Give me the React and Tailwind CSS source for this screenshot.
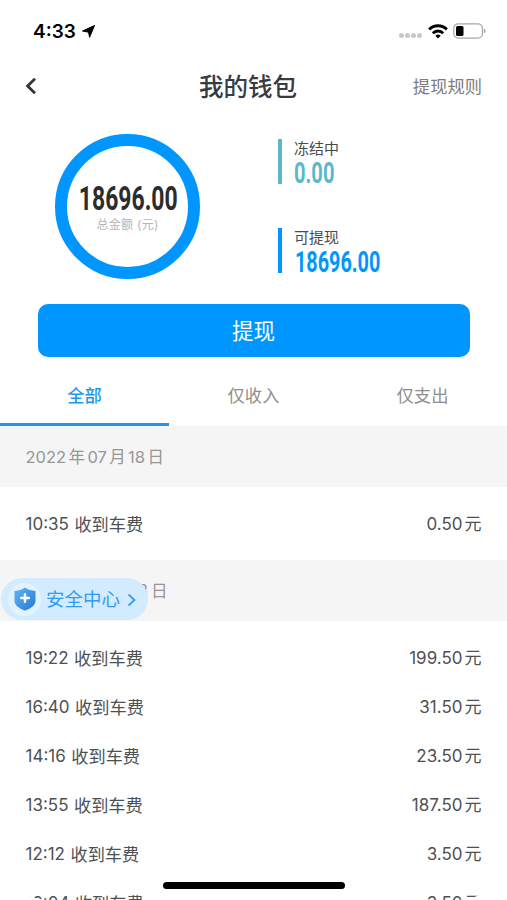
import React, { useState } from 'react';

const tabs = ['全部', '仅收入', '仅支出'];

const groups = [
  {
    date: ['2022', '年', '07', '月', '18', '日'],
    items: [{ time: '10:35', amount: '0.50' }],
  },
  {
    date: ['2022', '年', '07', '月', '13', '日'],
    items: [
      { time: '19:22', amount: '199.50' },
      { time: '16:40', amount: '31.50' },
      { time: '14:16', amount: '23.50' },
      { time: '13:55', amount: '187.50' },
      { time: '12:12', amount: '3.50' },
      { time: '12:04', amount: '3.50' },
    ],
  },
];

const StatusBar = () => (
  <div className="flex h-[62px] shrink-0 items-center justify-between pr-5 pl-[33px] text-black">
    <div className="flex items-center gap-[6px]">
      <span className="text-[19px] leading-none font-semibold">4:33</span>
      <svg width="13" height="13" viewBox="0 0 13 13" fill="currentColor">
        <path d="M12.5 0.5 7.6 12.3 6.5 7.2 0.5 6Z" stroke="currentColor" strokeWidth="1" strokeLinejoin="round" />
      </svg>
    </div>
    <div className="flex items-center">
      <div className="mt-[9px] flex gap-[1px]">
        {[0, 1, 2, 3].map((i) => (
          <span key={i} className="size-[5px] rounded-full bg-[#c8c8c8]" />
        ))}
      </div>
      <svg className="ml-[6px]" width="20" height="15" viewBox="0 0 20 15" fill="none" stroke="currentColor" strokeWidth="2.9">
        <path d="M1.2 5.4a12.5 12.5 0 0 1 17.6 0" />
        <path d="M4.8 9.2a7.4 7.4 0 0 1 10.4 0" />
        <path d="M10 14.4 7.3 11.8a3.9 3.9 0 0 1 5.4 0Z" fill="currentColor" stroke="none" />
      </svg>
      <svg className="ml-[5px]" width="34" height="16" viewBox="0 0 34 16">
        <rect x="0.8" y="0.8" width="28.6" height="14.4" rx="4.4" fill="none" stroke="#a6a6a6" strokeWidth="1.2" />
        <rect x="3" y="3" width="7.5" height="10" rx="1.6" fill="#000" />
        <path d="M30.8 5.5v5c2.4-.8 2.4-4.2 0-5Z" fill="#a6a6a6" />
      </svg>
    </div>
  </div>
);

const Header = () => (
  <div className="grid h-[50px] shrink-0 grid-cols-3 items-center px-[25px]">
    <svg className="-mt-[2px]" width="12" height="18" viewBox="0 0 12 18" fill="none" stroke="#30363d" strokeWidth="2.8">
      <path d="M10 1.8 2.6 9l7.4 7.2" />
    </svg>
    <h1 className="pr-[11px] text-center text-[24.5px] leading-none font-medium text-[#353c44]">我的钱包</h1>
    <span className="text-right text-[17.3px] leading-none text-[#7d7d7d]">提现规则</span>
  </div>
);

const Summary = () => (
  <div className="flex h-[192px] shrink-0 items-start pt-[22px] pl-[55px]">
    <div className="flex size-[145px] flex-col items-center rounded-full border-[12px] border-[#0096ff] pt-[36px]">
      <div className="flex h-[32px] w-[100px] items-center justify-center">
        <span className="ml-[1px] scale-x-[0.675] font-[Roboto] text-[34px] leading-none font-bold text-[#2c2c2c]">18696.00</span>
      </div>
      <span className="mt-[5px] text-[12px] leading-none tracking-[0.3px] whitespace-nowrap text-[#b5b5b5]">总金额 (元)</span>
    </div>
    <div className="mt-[5px] ml-[78px] flex flex-col gap-[44px]">
      <div className="h-[45px] border-l-4 border-[#5bb8cb] pl-[12px]">
        <p className="mt-[1px] text-[15px] leading-[18px] text-[#4a4a4a]">冻结中</p>
        <p className="w-[64px] origin-left scale-x-[0.67] font-[Roboto] text-[30px] leading-[30px] font-bold text-[#5bb8cb]">0.00</p>
      </div>
      <div className="h-[45px] border-l-4 border-[#0096ff] pl-[12px]">
        <p className="mt-[1px] text-[15px] leading-[18px] text-[#4a4a4a]">可提现</p>
        <p className="ml-[1px] w-[128px] origin-left scale-x-[0.66] font-[Roboto] text-[30px] leading-[30px] font-bold text-[#0096ff]">18696.00</p>
      </div>
    </div>
  </div>
);

const SafetyCenter = () => (
  <button className="absolute top-[578px] left-[1px] flex h-[42px] w-[147px] items-center rounded-full bg-[#d3ebff] pl-[7px] text-[#2f9bf4]">
    <span className="flex size-[33px] shrink-0 items-center justify-center rounded-full bg-[#e3f2ff]">
      <svg width="22" height="24" viewBox="0 0 22 24">
        <defs>
          <linearGradient id="shield" x1="0" y1="0" x2="1" y2="1">
            <stop offset="0" stopColor="#63b5f6" />
            <stop offset="1" stopColor="#2378d6" />
          </linearGradient>
        </defs>
        <path d="M11 .5c3 2.1 6.5 3.1 10.500 3.500v10c0 4.500-5 7.500-10.500 9.700C5.500 21.500.5 18.500.5 14V4C4.500 3.600 8 2.600 11 .5Z" fill="url(#shield)" />
        <path d="M11 7.2v7.6M7.2 11h7.6" stroke="#fff" strokeWidth="2.5" strokeLinecap="round" />
      </svg>
    </span>
    <span className="mt-[1px] ml-[5px] text-[18.5px] leading-none whitespace-nowrap">安全中心</span>
    <svg className="mt-[1px] ml-[7px]" width="9" height="14" viewBox="0 0 9 14" fill="none" stroke="currentColor" strokeWidth="1.7">
      <path d="M1.5 1.5 7.5 7l-6 5.500" />
    </svg>
  </button>
);

const App = () => {
  const [active, setActive] = useState(0);

  return (
    <div className="relative flex h-[900px] w-[507px] flex-col overflow-hidden rounded-b-[50px] bg-white font-['Inter','Noto_Sans_CJK_SC',sans-serif]">
      <StatusBar />
      <Header />
      <Summary />

      <button className="mx-[37.5px] h-[53px] shrink-0 rounded-[10px] bg-[#0096ff] pt-[2px] text-[21.5px] leading-none text-white">
        提现
      </button>

      <div className="mt-[8px] grid h-[61px] shrink-0 grid-cols-3">
        {tabs.map((tab, i) => (
          <button
            key={tab}
            onClick={() => setActive(i)}
            className={
              active === i
                ? 'border-b-[3px] border-[#1e96f0] pt-[4px] text-[17.3px] leading-none font-medium text-[#1e96f0]'
                : 'border-b-[3px] border-transparent pt-[4px] text-[17.3px] leading-none text-[#8f8f8f]'
            }
          >
            {tab}
          </button>
        ))}
      </div>

      {groups.map((group, g) => (
        <section key={g} className="shrink-0">
          <div
            className={
              g === 0
                ? 'flex h-[61px] items-center gap-[2.4px] bg-[#f5f5f5] px-[25.5px] pt-[2px] text-[16.5px] text-[#969696]'
                : 'flex h-[61px] items-center gap-[3px] bg-[#f5f5f5] px-[25.5px] pt-[2px] text-[16.6px] text-[#969696]'
            }
          >
            {group.date.map((part, i) => (
              <span key={i}>{part}</span>
            ))}
          </div>
          <ul className="py-[12px]">
            {group.items.map((item) => (
              <li key={item.time} className="flex h-[49px] items-center justify-between px-[25.5px] pt-[3px] text-[17px] text-[#4c5156]">
                <span className="flex gap-[5.5px]">
                  <span>{item.time}</span>
                  <span className="text-[17.2px]">收到车费</span>
                </span>
                <span className="flex gap-[2px] text-[#505050]">
                  {item.amount}
                  <span>元</span>
                </span>
              </li>
            ))}
          </ul>
        </section>
      ))}

      <SafetyCenter />
      <div className="absolute top-[882px] left-[163px] h-[7px] w-[182px] rounded-full bg-black" />
    </div>
  );
};

export default App;
